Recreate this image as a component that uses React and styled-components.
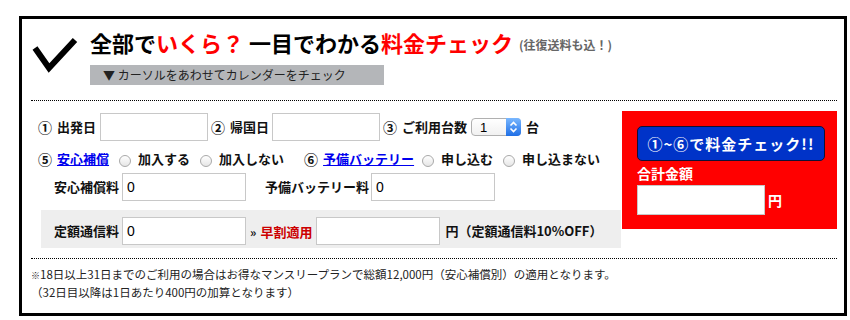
import React from 'react';
import styled, { createGlobalStyle } from 'styled-components';

const GlobalStyle = createGlobalStyle`
  html, body { margin: 0; padding: 0; background: #fff; }
  body { font-family: "Noto Sans CJK JP", "Noto Sans", sans-serif; color: #111; }
`;

const Page = styled.div`
  padding: 16px 0 0 19px;
`;

const Frame = styled.div`
  box-sizing: border-box;
  width: 828px;
  height: 300px;
  border: 3px solid #000;
  padding: 0 7px 0 9px;
`;

const Header = styled.div`
  display: flex;
  padding-top: 10px;
`;

const CheckMark = styled.svg`
  flex: none;
  margin: 6px 11px 0 0;
`;

const HeadText = styled.div`
  display: flex;
  flex-direction: column;
`;

const Title = styled.h1`
  margin: 0;
  font-size: 22px;
  line-height: 26px;
  font-weight: 700;
  color: #000;
  white-space: nowrap;
`;

const Accent = styled.span`
  color: #ff0000;
`;

const TitleNote = styled.span`
  font-size: 12px;
  font-weight: 700;
  color: #666;
  margin-left: 6px;
  vertical-align: 2px;
`;

const Hint = styled.div`
  box-sizing: border-box;
  margin-top: 7px;
  width: 294px;
  height: 20px;
  background: #b4b6b9;
  padding-left: 13px;
  font-size: 12px;
  line-height: 20px;
  color: #222;
  white-space: nowrap;
`;

const Dotted = styled.hr`
  margin: ${p => p.$mt}px 0 0;
  border: 0;
  border-top: 1px dotted #000;
  height: 0;
`;

const FormArea = styled.div`
  display: flex;
  padding-top: 10px;
`;

const Fields = styled.div`
  flex: 1;
  display: flex;
  flex-direction: column;
  padding-left: 7px;
`;

const Row = styled.div`
  display: flex;
  align-items: center;
  height: ${p => p.$h}px;
  margin-top: ${p => p.$mt}px;
  padding-left: ${p => p.$pl || 0}px;
  white-space: nowrap;
`;

const ShadedRow = styled.div`
  box-sizing: border-box;
  display: flex;
  align-items: center;
  height: 38px;
  margin: 9px 1px 0 3px;
  padding: 4px 0 0 13px;
  background: #eeeeee;
  white-space: nowrap;
`;

const Label = styled.span`
  display: inline-flex;
  align-items: center;
  font-size: 13px;
  font-weight: 700;
  line-height: 18px;
  color: #111;
  margin-left: ${p => p.$ml || 0}px;
  margin-right: ${p => p.$mr || 0}px;
`;

const Num = styled.span`
  font-size: 14px;
  font-weight: 700;
  margin-right: 5px;
`;

const LinkText = styled.a`
  font-size: 13px;
  font-weight: 700;
  line-height: 18px;
  color: #0000ee;
  text-decoration: underline;
  cursor: pointer;
`;

const EarlyLabel = styled.span`
  font-size: 13px;
  font-weight: 700;
  color: #cc0000;
  margin-right: 4px;
`;

const Guillemet = styled.span`
  font-size: 12px;
  font-weight: 700;
  color: #111;
  margin: 0 4px 0 4px;
`;

const TextInput = styled.input`
  box-sizing: border-box;
  width: ${p => p.$w}px;
  height: ${p => p.$h || 28}px;
  border: 1px solid #c8c8c8;
  background: #fff;
  padding: 0 4px;
  margin: 0 ${p => p.$mr || 0}px 0 ${p => p.$ml || 0}px;
  font: 14px "Liberation Sans", Arial, sans-serif;
  color: #000;
  outline: none;
`;

const Radio = styled.input.attrs({ type: 'radio' })`
  appearance: none;
  box-sizing: border-box;
  width: 12px;
  height: 12px;
  margin: 3px 7px 0 ${p => p.$ml || 10}px;
  border-radius: 50%;
  border: 1px solid #a9a9a9;
  background: linear-gradient(#ffffff, #e6e6e6);
  flex: none;
`;

const SelectWrap = styled.span`
  position: relative;
  display: inline-flex;
  margin-right: 5px;
`;

const Select = styled.select`
  appearance: none;
  box-sizing: border-box;
  width: 50px;
  height: 18px;
  border: 1px solid #b0b0b0;
  border-radius: 4px;
  background: linear-gradient(#ffffff, #f1f1f1);
  padding: 0 0 0 8px;
  font: 13px "Liberation Sans", Arial, sans-serif;
  color: #000;
  outline: none;
`;

const SelectArrow = styled.span`
  position: absolute;
  right: 0;
  top: 0;
  width: 15px;
  height: 18px;
  border-radius: 0 4px 4px 0;
  background: linear-gradient(#7ab8ff, #1f6fe6);
  display: flex;
  align-items: center;
  justify-content: center;
  pointer-events: none;
`;

const Panel = styled.div`
  flex: none;
  box-sizing: border-box;
  width: 215px;
  height: 118px;
  background: #ff0000;
  padding: 15px 0 0 15px;
`;

const CheckButton = styled.button`
  display: block;
  box-sizing: border-box;
  width: 188px;
  height: 35px;
  padding: 0;
  border: 1px solid #111133;
  border-radius: 5px;
  background: #0033c8;
  color: #fff;
  font: 700 15px "Noto Sans CJK JP", sans-serif;
  letter-spacing: 1px;
  cursor: pointer;
`;

const TotalLabel = styled.div`
  margin-top: 4px;
  font-size: 14px;
  font-weight: 700;
  line-height: 16px;
  color: #fff;
`;

const TotalRow = styled.div`
  display: flex;
  align-items: center;
  margin-top: 4px;
`;

const Yen = styled.span`
  margin-left: 3px;
  font-size: 14px;
  font-weight: 700;
  color: #fff;
`;

const Footnote = styled.div`
  margin-top: 7px;
  font-size: 11.5px;
  line-height: 16px;
  color: #222;
  white-space: nowrap;
`;

const Kome = styled.span`
  font-size: 9px;
`;

export default function App() {
  return (
    <Page>
      <GlobalStyle />
      <Frame>
        <Header>
          <CheckMark width="48" height="40" viewBox="0 0 48 40">
            <polyline points="4,13 18,33 44,5" fill="none" stroke="#000" strokeWidth="6" strokeLinejoin="miter" />
          </CheckMark>
          <HeadText>
            <Title>
              全部で<Accent>いくら？</Accent> 一目でわかる<Accent>料金チェック</Accent>
              <TitleNote>(往復送料も込！)</TitleNote>
            </Title>
            <Hint>▼ カーソルをあわせてカレンダーをチェック</Hint>
          </HeadText>
        </Header>
        <Dotted $mt={15} />
        <FormArea>
          <Fields>
            <Row $h={28} $mt={2}>
              <Label $mr={4}><Num>①</Num>出発日</Label>
              <TextInput $w={108} $mr={3} />
              <Label $mr={3}><Num>②</Num>帰国日</Label>
              <TextInput $w={108} $mr={3} />
              <Label $mr={4}><Num>③</Num>ご利用台数</Label>
              <SelectWrap>
                <Select defaultValue="1">
                  <option value="1">1</option>
                  <option value="2">2</option>
                  <option value="3">3</option>
                </Select>
                <SelectArrow>
                  <svg width="9" height="12" viewBox="0 0 9 12">
                    <path d="M1.5 4.5 L4.5 1.5 L7.5 4.5 M1.5 7.5 L4.5 10.5 L7.5 7.5" fill="none" stroke="#fff" strokeWidth="1.6" />
                  </svg>
                </SelectArrow>
              </SelectWrap>
              <Label>台</Label>
            </Row>
            <Row $h={18} $mt={9}>
              <Label><Num>⑤</Num></Label>
              <LinkText>安心補償</LinkText>
              <Radio name="insurance" />
              <Label>加入する</Label>
              <Radio name="insurance" />
              <Label>加入しない</Label>
              <Label $ml={20}><Num>⑥</Num></Label>
              <LinkText>予備バッテリー</LinkText>
              <Radio name="battery" $ml={8} />
              <Label>申し込む</Label>
              <Radio name="battery" />
              <Label>申し込まない</Label>
            </Row>
            <Row $h={28} $mt={5} $pl={16}>
              <Label $mr={3}>安心補償料</Label>
              <TextInput $w={124} defaultValue="0" />
              <Label $ml={19} $mr={2}>予備バッテリー料</Label>
              <TextInput $w={124} defaultValue="0" />
            </Row>
            <ShadedRow>
              <Label $mr={3}>定額通信料</Label>
              <TextInput $w={124} defaultValue="0" />
              <Guillemet>»</Guillemet>
              <EarlyLabel>早割適用</EarlyLabel>
              <TextInput $w={124} $mr={5} />
              <Label>円（定額通信料10%OFF）</Label>
            </ShadedRow>
          </Fields>
          <Panel>
            <CheckButton type="button">①~⑥で料金チェック!!</CheckButton>
            <TotalLabel>合計金額</TotalLabel>
            <TotalRow>
              <TextInput $w={128} $h={30} />
              <Yen>円</Yen>
            </TotalRow>
          </Panel>
        </FormArea>
        <Dotted $mt={10} />
        <Footnote>
          <Kome>※</Kome>18日以上31日までのご利用の場合はお得なマンスリープランで総額12,000円（安心補償別）の適用となります。
          <br />
          （32日目以降は1日あたり400円の加算となります）
        </Footnote>
      </Frame>
    </Page>
  );
}
